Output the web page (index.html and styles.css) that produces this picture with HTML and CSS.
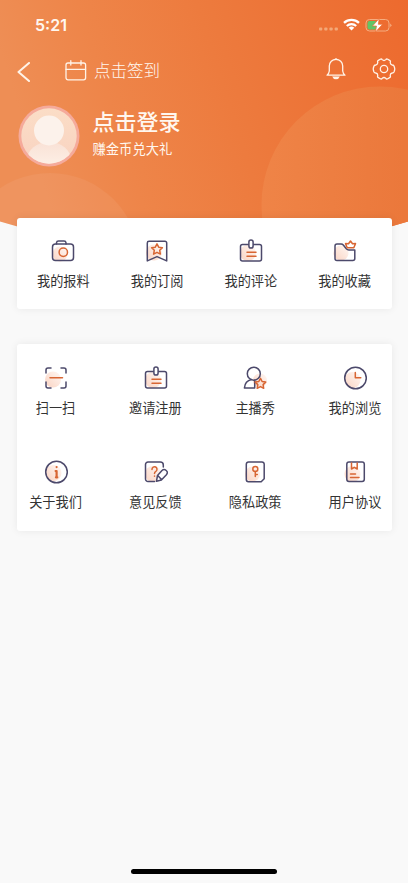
FILE: index.html
```html
<!DOCTYPE html>
<html lang="zh-CN">
<head>
<meta charset="utf-8">
<meta name="viewport" content="width=device-width, initial-scale=1">
<title>我的</title>
<link rel="stylesheet" href="styles.css">
</head>
<body>
<svg width="0" height="0" class="defs">
  <defs>
    <linearGradient id="glow" x1="0" y1="1" x2="1" y2="0"><stop offset="0" stop-color="#fad3c2"/><stop offset="1" stop-color="#fff8f4"/></linearGradient>
    <symbol id="badge" viewBox="0 0 24 24"><circle cx="9" cy="14" r="8" fill="url(#glow)" stroke="none"/><path d="M9.500 5.500H3.500a2 2 0 0 0-2 2v12.500a2 2 0 0 0 2 2h17a2 2 0 0 0 2-2v-12.500a2 2 0 0 0-2-2h-6"/><rect x="9.900" y="1" width="4.200" height="8" rx="2.100" fill="#fff"/><path class="accent" d="M8 13.200h9M8 17.200h9"/></symbol>
  </defs>
</svg>
<div class="screen">
  <svg class="backdrop" viewBox="0 0 408 256" width="408" height="256">
    <defs>
      <linearGradient id="sky" x1="0" y1="0.200" x2="1" y2="0"><stop offset="0" stop-color="#ee8e55"/><stop offset=".22" stop-color="#ee8549"/><stop offset=".5" stop-color="#ed7b3e"/><stop offset="1" stop-color="#ed6a2e"/></linearGradient>
      <linearGradient id="disc"><stop offset="0" stop-color="#ef8447"/><stop offset=".6" stop-color="#eb783b"/><stop offset="1" stop-color="#eb783b"/></linearGradient>
      <clipPath id="hill"><path d="M0 0H408V221.500Q204 284 0 221.500Z"/></clipPath>
    </defs>
    <g clip-path="url(#hill)">
      <rect width="408" height="256" fill="url(#sky)"/>
      <circle cx="380" cy="205" r="118.500" fill="url(#disc)"/>
      <circle cx="50" cy="263" r="90" fill="#fff" opacity=".06"/>
    </g>
  </svg>

  <header class="header">
    <div class="status">
      <span class="time">5:21</span>
      <svg class="signals" width="74" height="16" viewBox="0 0 74 16">
        <g fill="#f3a878"><rect x="1" y="11.500" width="3.300" height="3" rx="1"/><rect x="6.200" y="11.500" width="3.300" height="3" rx="1"/><rect x="11.400" y="11.500" width="3.300" height="3" rx="1"/><rect x="16.600" y="11.500" width="3.300" height="3" rx="1"/></g>
        <g fill="none" stroke="#fff" stroke-width="2.300"><path d="M26 6.800a11 11 0 0 1 15 0"/><path d="M28.800 10a7 7 0 0 1 9.400 0"/></g>
        <path d="M30.700 11.700a4.200 4.200 0 0 1 5.600 0L33.500 14.500Z" fill="#fff"/>
        <rect x="48" y="3.500" width="23" height="11.500" rx="3.500" fill="none" stroke="#f5ad80"/>
        <path d="M72.200 7.500v3.500q2.500-1.750 0-3.500z" fill="#f5ad80"/>
        <rect x="49.500" y="5" width="9" height="8.500" rx="2" fill="#62c466"/>
        <path d="M61.200 2.500 54.500 10h4L57.500 16 64.500 8.300h-4.200z" fill="#fff" stroke="#ed7034" stroke-width=".7"/>
      </svg>
    </div>
    <nav class="nav">
      <svg class="back" width="14" height="20" viewBox="0 0 14 20"><path d="M12 1 1.500 10 12 19"/></svg>
      <svg class="calendar" width="22" height="21" viewBox="0 0 22 21"><rect x="1" y="3" width="19.600" height="16.800" rx="2"/><path d="M1 9.300h19.600M5.800.7v4.300M16 .7v4.300"/></svg>
      <span class="checkin">点击签到</span>
      <svg class="bell" width="20" height="22" viewBox="0 0 20 22"><path d="M1 17.200h18q-2-1.600-2.300-4.200V8A6.700 6.700 0 0 0 3.300 8v5Q3 15.600 1 17.200Z"/><path d="M9 1.500q1-1 2 0" /><path d="M6.200 18.500h7.600q-1 2.800-3.800 2.800t-3.800-2.800z" class="solid"/></svg>
      <svg class="gear" width="24" height="22" viewBox="0 0 24 22"><path d="M8.200 1.300Q9.500.5 10.200 1.600 12 3.300 13.800 1.600 14.500.5 15.800 1.300L18 2.600Q18.700 3.200 18.300 4.200 18 6.500 20.200 7 21.500 7 22 8L22.700 10.300V11.700L22 14Q21.500 15 20.200 15 18 15.500 18.300 17.800 18.700 18.800 18 19.400L15.800 20.700Q14.500 21.500 13.800 20.400 12 18.700 10.200 20.400 9.500 21.500 8.200 20.700L6 19.400Q5.300 18.800 5.700 17.800 6 15.500 3.800 15 2.500 15 2 14L1.300 11.700V10.300L2 8Q2.500 7 3.800 7 6 6.500 5.700 4.200 5.300 3.200 6 2.600Z"/><circle cx="12" cy="11" r="3.700"/></svg>
    </nav>
    <div class="profile">
      <svg class="avatar" width="62" height="62" viewBox="0 0 62 62">
        <defs><clipPath id="face"><circle cx="31" cy="31" r="27.700"/></clipPath><linearGradient id="skin" x2="0" y2="1"><stop offset="0" stop-color="#fbddc6"/><stop offset="1" stop-color="#f9d3c1"/></linearGradient><linearGradient id="body" x2="0" y2="1"><stop offset="0" stop-color="#f9e1d5"/><stop offset="1" stop-color="#fff7ef"/></linearGradient></defs>
        <circle cx="31" cy="31" r="30.500" fill="#f5aa9b"/><circle cx="31" cy="31" r="27.700" fill="url(#skin)"/>
        <ellipse cx="31" cy="55" rx="22" ry="18" fill="url(#body)" clip-path="url(#face)"/><circle cx="31" cy="25.500" r="15" fill="#fcf2eb"/>
      </svg>
      <div class="welcome"><div class="login">点击登录</div><div class="reward">赚金币兑大礼</div></div>
    </div>
  </header>

  <section class="card shortcuts">
    <div class="item"><svg class="icon" viewBox="0 0 24 24"><circle cx="9" cy="15" r="7.500" fill="url(#glow)"/><rect x="1.500" y="5" width="21" height="16.500" rx="3"/><path d="M5.500 5V3.800a2 2 0 0 1 2-1.800h5.500a2 2 0 0 1 2 1.800V5"/><circle class="accent" cx="12.300" cy="13.300" r="4.200"/></svg><span>我的报料</span></div>
    <div class="item"><svg class="icon" viewBox="0 0 24 24"><circle cx="9" cy="13.500" r="8" fill="url(#glow)"/><path d="M4 2.200h16a1.700 1.700 0 0 1 1.700 1.700v18L12 17.600 2.300 21.900v-18A1.700 1.700 0 0 1 4 2.200z"/><path class="accent" d="m12 4.800 1.700 3.400 3.700.5-2.700 2.600.7 3.800-3.400-1.800-3.400 1.800.7-3.800-2.700-2.600 3.700-.5z"/></svg><span>我的订阅</span></div>
    <div class="item"><svg class="icon"><use href="#badge"/></svg><span>我的评论</span></div>
    <div class="item"><svg class="icon" viewBox="0 0 24 24"><circle cx="8" cy="14" r="7.500" fill="url(#glow)"/><path d="M4 5h4q1.500 0 2.500 1.200l2.800 3.600q1 1.200 2.500 1.200h6v8.500a2 2 0 0 1-2 2H4a2 2 0 0 1-2-2V7a2 2 0 0 1 2-2z"/><path class="accent" d="m17.500 2 2 2.800 3-.2-1.700 4.200h-6.600l-1.700-4.200 3 .2z"/></svg><span>我的收藏</span></div>
  </section>

  <section class="card tools">
    <div class="item"><svg class="icon" viewBox="0 0 24 24"><circle cx="9" cy="13.500" r="8" fill="url(#glow)"/><path d="M2 7V4a2 2 0 0 1 2-2h3M17 2h3a2 2 0 0 1 2 2v3M22 16v4a2 2 0 0 1-2 2h-3M7 22H4a2 2 0 0 1-2-2v-4"/><path class="accent" d="M6 11.800h12.500"/></svg><span>扫一扫</span></div>
    <div class="item"><svg class="icon shifted"><use href="#badge"/></svg><span>邀请注册</span></div>
    <div class="item"><svg class="icon" viewBox="0 0 24 24"><circle cx="17" cy="14.500" r="7" fill="url(#glow)"/><circle cx="10.800" cy="7.700" r="6.500"/><path d="M8.500 13.600Q2 15 1.400 22h10.300v-7.700"/><path class="accent" d="m17.500 12.300 1.600 3.200 3.600.6-2.600 2.500.6 3.700-3.200-1.700-3.300 1.700.6-3.700-2.600-2.500 3.600-.6z"/></svg><span>主播秀</span></div>
    <div class="item"><svg class="icon" viewBox="0 0 24 24"><circle cx="9.500" cy="14" r="8" fill="url(#glow)"/><circle cx="12.500" cy="12" r="10.800"/><path class="accent" d="M12.300 6.500v5.300h5.500"/></svg><span>我的浏览</span></div>
    <div class="item"><svg class="icon" viewBox="0 0 24 24"><circle cx="9.500" cy="13" r="8" fill="url(#glow)"/><circle cx="12.500" cy="12" r="10.800"/><path class="info" d="M12.600 7v.1M12.600 11.300v6M11.600 11.100h1M11.900 17.300h1.400"/></svg><span>关于我们</span></div>
    <div class="item"><svg class="icon shifted" viewBox="0 0 24 24"><circle cx="9" cy="14" r="8" fill="url(#glow)"/><path d="M19.300 7V5a3 3 0 0 0-3-3H4a2.500 2.500 0 0 0-2.500 2.500v14.500A2.500 2.500 0 0 0 4 21.500h6.500"/><path class="accent" d="M8 9.400V9.200a2.500 2.500 0 1 1 3.800 2.100q-1.300.7-1.300 2.200M10.500 16v.3"/><path fill="#fff" d="m13.500 15.500 4.500-5q2-1.900 4.200 0t.2 4.200l-5 5.300-4.900 1.200zM13.700 15.500l3.800 4"/></svg><span>意见反馈</span></div>
    <div class="item"><svg class="icon" viewBox="0 0 24 24"><circle cx="9.500" cy="14" r="7.500" fill="url(#glow)"/><path d="M5.500 2h13.500a2.200 2.200 0 0 1 2.200 2.200v14.500l-3 3H5.500a2.200 2.200 0 0 1-2.200-2.200V4.200A2.200 2.200 0 0 1 5.500 2z"/><circle class="accent" cx="12.300" cy="9" r="2.500"/><path class="accent" d="M12.300 11.500v5M12.300 14.500h2"/></svg><span>隐私政策</span></div>
    <div class="item"><svg class="icon" viewBox="0 0 24 24"><circle cx="9.500" cy="14" r="8" fill="url(#glow)"/><rect x="3.800" y="2" width="17.500" height="19.500" rx="2.200"/><path class="accent" d="M8.500 3v6l2.800-1.700L14.200 9V3M7.500 14h5M7.500 17.600h8.500"/></svg><span>用户协议</span></div>
  </section>
  <footer class="home"></footer>
</div>
</body>
</html>
```

FILE: styles.css
```css
* { box-sizing: border-box; }
body { margin: 0; background: #f9f9f9; color: #333; font-family: Inter, "Noto Sans CJK SC", sans-serif; }
.defs { position: absolute; }
.screen { position: relative; width: 408px; height: 883px; display: flex; flex-direction: column; overflow: hidden; }
.backdrop { position: absolute; top: 0; left: 0; }
.header { position: relative; height: 218px; flex: none; color: #fff7ef; }
.status { height: 50px; display: flex; align-items: center; justify-content: space-between; padding: 0 16px 0 35px; }
.signals { margin-bottom: 2px; }
.time { font-size: 16px; font-weight: 600; line-height: 20px; }
.nav { height: 40px; display: flex; align-items: center; padding: 0 12px 0 17px; }
.nav svg { fill: none; stroke: #fff3e8; stroke-width: 1.3; stroke-linejoin: round; stroke-linecap: round; flex: none; }
.nav .back { stroke-width: 2; margin-top: 3px; }
.calendar { margin-left: 34px; }
.checkin { margin-left: 7px; padding-top: 2px; font-size: 16.5px; line-height: 24px; font-weight: 300; }
.bell { margin-left: auto; margin-top: -2px; }
.nav .bell .solid { fill: #fff3e8; stroke: none; }
.gear { margin-left: 26px; margin-top: -2px; }
.profile { display: flex; padding: 15px 0 0 18px; }
.welcome { padding: 1px 0 0 12.5px; }
.login { font-size: 22px; line-height: 32px; font-weight: 500; }
.reward { font-size: 13.3px; line-height: 20px; margin-top: 1px; }
.card { position: relative; flex: none; width: 375px; margin-left: 16.5px; background: #fff; border-radius: 3px; box-shadow: 0 0 9px rgba(0, 0, 0, .07); }
.item { display: flex; flex-direction: column; align-items: center; font-size: 13.2px; line-height: 20px; white-space: nowrap; }
.icon { width: 24px; height: 24px; margin-bottom: 8px; fill: none; stroke: #4c496b; stroke-width: 1.5; stroke-linejoin: round; stroke-linecap: round; }
.icon.shifted { margin-left: 2px; }
.icon circle[fill] { stroke: none; }
.accent { stroke: #d86634; }
.info { stroke: #d86634; stroke-width: 2.2; }
.shortcuts { height: 91px; display: grid; grid-template-columns: repeat(4, 1fr); padding-top: 21px; }
.tools { height: 187px; margin-top: 35px; padding: 22px 10px 0 12.5px; display: grid; grid-template-columns: repeat(4, 53px); grid-auto-rows: 52px; justify-content: space-between; align-content: start; row-gap: 42px; }
.home { width: 146px; height: 5px; border-radius: 3px; background: #000; margin: auto auto 9px; }
```
